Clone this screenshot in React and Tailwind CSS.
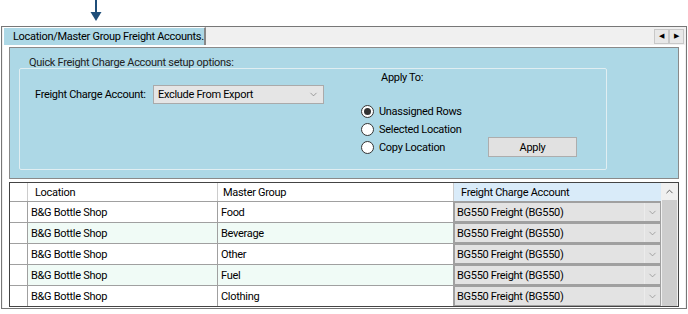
import { ChevronDown, ChevronUp } from 'lucide-react';

const rows = [
  { location: 'B&G Bottle Shop', group: 'Food' },
  { location: 'B&G Bottle Shop', group: 'Beverage' },
  { location: 'B&G Bottle Shop', group: 'Other' },
  { location: 'B&G Bottle Shop', group: 'Fuel' },
  { location: 'B&G Bottle Shop', group: 'Clothing' },
];

function Radio({ checked, label }) {
  return (
    <div className="flex h-[18px] items-center gap-[5px]">
      <span className="flex h-[13px] w-[13px] items-center justify-center rounded-full border border-[#333] bg-white">
        {checked && <span className="h-[7px] w-[7px] rounded-full bg-[#333]" />}
      </span>
      <span>{label}</span>
    </div>
  );
}

export default function App() {
  return (
    <div className="h-[314px] w-[688px] bg-white text-[11px] leading-none tracking-[-0.3px] text-black" style={{ fontFamily: 'Roboto, "Liberation Sans", Arial, sans-serif' }}>
      <div className="flex h-[26px] pl-[90px]">
        <svg className="block" width="12" height="22" viewBox="0 0 12 22">
          <line x1="6" y1="0" x2="6" y2="14" stroke="#1f4e79" strokeWidth="2" />
          <polygon points="0.5,12 11.5,12 6,21" fill="#1f4e79" />
        </svg>
      </div>

      <div className="ml-[1px] flex h-[283px] w-[686px] flex-col border border-[#777] bg-[#f0f0f0]">
        <div className="flex h-[18px] items-end justify-between">
          <div className="ml-[1px] flex h-[18px] w-[203px] items-center whitespace-nowrap border-l border-t border-r-2 border-l-white border-t-white border-r-[#888] bg-[#add8e6] pl-[9px]">
            Location/Master Group Freight Accounts.
          </div>
          <div className="mb-[1px] mr-[2px] flex">
            <div className="flex h-[15px] w-[15px] items-center justify-center border border-[#c8c8c8] bg-[#e8e8e8] text-[7px]">◀</div>
            <div className="flex h-[15px] w-[15px] items-center justify-center border border-[#c8c8c8] bg-[#e8e8e8] text-[7px]">▶</div>
          </div>
        </div>

        <div className="ml-[1px] mr-[1px] flex flex-1 flex-col border border-white bg-white px-[5px] pt-[1px]">
          <div className="relative h-[132px] border border-[#8a8a8a] bg-[#add8e6]">
            <div className="absolute left-[9px] top-[20px] h-[102px] w-[588px] rounded-[2px] border border-[#e0eef2]" />
            <div className="absolute left-[15px] top-[9px] bg-[#add8e6] px-[4px] text-[#222]">Quick Freight Charge Account setup options:</div>
            <div className="absolute left-[25px] top-[37px] flex h-[19px] items-center">Freight Charge Account:</div>
            <div className="absolute left-[143px] top-[37px] flex h-[19px] w-[171px] items-center justify-between border border-[#aaa] bg-[#e5e5e5] pl-[4px] pr-[4px]">
              <span>Exclude From Export</span>
              <ChevronDown size={11} strokeWidth={1.5} color="#777" />
            </div>
            <div className="absolute left-[371px] top-[24px]">Apply To:</div>
            <div className="absolute left-[351px] top-[54px] flex flex-col">
              <Radio checked label="Unassigned Rows" />
              <Radio label="Selected Location" />
              <Radio label="Copy Location" />
            </div>
            <div className="absolute left-[478px] top-[89px] flex h-[20px] w-[89px] items-center justify-center border border-[#adadad] bg-[#e1e1e1]">
              Apply
            </div>
          </div>

          <div className="mt-[3px] flex h-[125px] border border-[#444] bg-[#f0f0f0]">
            <div className="flex flex-1 flex-col">
              <div className="flex h-[18px] bg-white">
                <div className="w-[18px] border-r border-[#ccc]" />
                <div className="flex w-[190px] items-center border-r border-[#ccc] pl-[7px]">Location</div>
                <div className="flex w-[236px] items-center border-r border-[#ccc] pl-[5px]">Master Group</div>
                <div className="flex flex-1 items-center bg-[#d9ebf9] pl-[7px]">Freight Charge Account</div>
              </div>
              {rows.map((row, i) => (
                <div key={row.group} className={`flex h-[21px] border-t border-[#a0a0a0] ${i % 2 ? 'bg-[#f0fbf6]' : 'bg-white'}`}>
                  <div className="w-[18px] border-r border-[#a0a0a0] bg-white" />
                  <div className="flex w-[190px] items-center border-r border-[#a0a0a0] pl-[3px]">{row.location}</div>
                  <div className="flex w-[236px] items-center border-r border-[#a0a0a0] pl-[3px]">{row.group}</div>
                  <div className="flex flex-1 items-center justify-between border border-[#a0a0a0] bg-[#e3e3e3] pl-[2px]">
                    <span>BG550 Freight (BG550)</span>
                    <span className="flex h-full w-[16px] items-center justify-center border-l border-[#ececec]">
                      <ChevronDown size={11} strokeWidth={1.5} color="#888" />
                    </span>
                  </div>
                </div>
              ))}
            </div>
            <div className="flex w-[17px] flex-col bg-[#f0f0f0]">
              <div className="flex h-[17px] items-center justify-center">
                <ChevronUp size={11} strokeWidth={2} color="#555" />
              </div>
              <div className="mx-[1px] flex-1 bg-[#cdcdcd]" />
            </div>
          </div>
        </div>
      </div>
    </div>
  );
}
